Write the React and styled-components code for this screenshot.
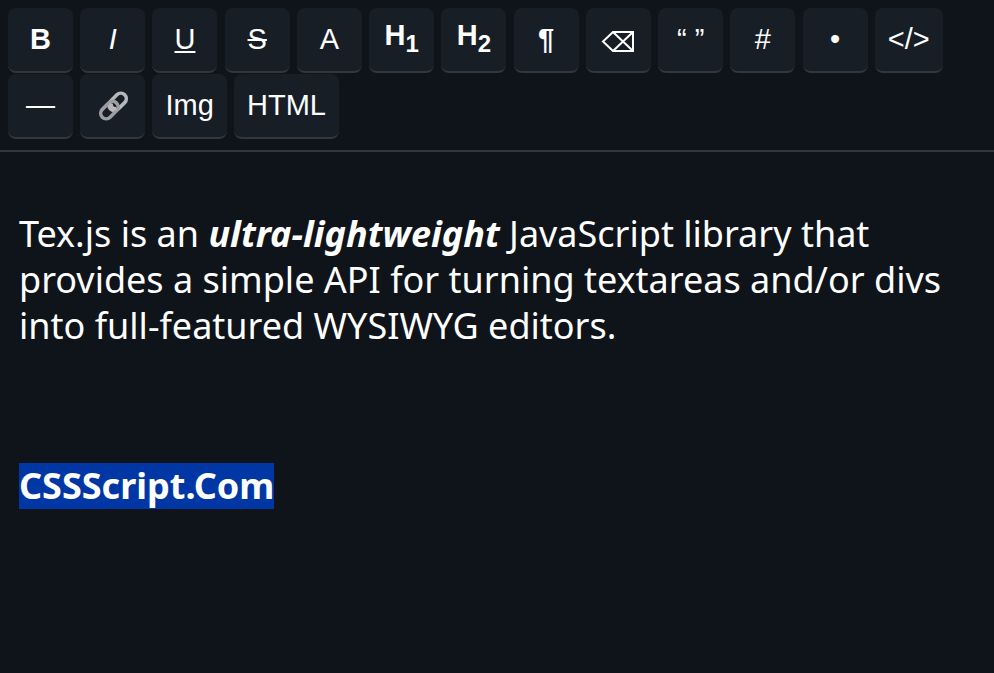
import React from 'react';
import styled, { createGlobalStyle } from 'styled-components';

const GlobalStyle = createGlobalStyle`
    body {
        margin: 0;
        background-color: #0f131a;
    }
`

const Editor = styled.div`
    min-height: 100vh;
    background-color: #0f131a;
    color: #fff;
`

// the spaces between the buttons come from this font size
const Toolbar = styled.div`
    padding: 8px 8px 10px;
    border-bottom: 2px solid #34363b;
    font-family: "Liberation Sans", Arial, sans-serif;
    font-size: 26px;
    line-height: 66px;
`

const Button = styled.button`
    display: inline-flex;
    align-items: center;
    justify-content: center;
    vertical-align: top;
    box-sizing: border-box;
    min-width: 65px;
    height: 65px;
    margin: 0;
    padding: 0 13px 2px;
    border: none;
    border-bottom: 2px solid #34363b;
    border-radius: 8px;
    background-color: #181e26;
    color: #fff;
    font-family: inherit;
    font-size: 29px;
    font-weight: ${props => props.$bold ? 'bold' : 'normal'};
    line-height: 36px;
    white-space: pre;
    cursor: pointer;

    :hover {
        background-color: #222832;
    }

    sub {
        font-size: 24px;
        line-height: 32px;
    }
`

const Icon = styled.svg`
    display: block;
    flex: none;
`

const Content = styled.div`
    padding: 25px 19px;
    font-family: "Segoe UI", "Noto Sans", sans-serif;
    font-size: 36px;
    line-height: 46px;
    outline: none;

    p {
        margin: 34px 0;
    }
`

const Selected = styled.b`
    display: inline-block;
    background-color: #0037a5;
`

const EraseIcon = () => (
    <Icon width="34" height="26" viewBox="0 0 34 26" fill="none" stroke="#fff" strokeWidth="2" aria-hidden="true">
        <path d="M12 6H32V25H12L2 15.5Z" />
        <path d="M12 6L32 25M32 6L12 25" />
    </Icon>
)

const LinkIcon = () => (
    <Icon width="32" height="34" viewBox="0 0 32 34" fill="none" strokeWidth="3.6" aria-hidden="true">
        <rect x="-10" y="-5.5" width="20" height="11" rx="5.5" stroke="#b6b8bc" transform="translate(20.6 13.9) rotate(-45)" />
        <rect x="-10" y="-5.5" width="20" height="11" rx="5.5" stroke="#9b9da1" transform="translate(12.4 22.1) rotate(-45)" />
        <path d="M14.2 15.4C13.6 18.4 15.6 21.4 19.4 20.6" stroke="#b6b8bc" />
    </Icon>
)

const Buttons = [
    { title: "Bold", label: "B", bold: true },
    { title: "Italic", label: <i>I</i> },
    { title: "Underline", label: <u>U</u> },
    { title: "Strike-through", label: <s>S</s> },
    { title: "Text color", label: "A" },
    { title: "Heading 1", label: <span>H<sub>1</sub></span>, bold: true },
    { title: "Heading 2", label: <span>H<sub>2</sub></span>, bold: true },
    { title: "Paragraph", label: "¶", bold: true },
    { title: "Remove format", label: <EraseIcon /> },
    { title: "Quote", label: "“ ”" },
    { title: "Ordered list", label: "#" },
    { title: "Unordered list", label: "•" },
    { title: "Code", label: "</>" },
    { title: "Horizontal line", label: "—" },
    { title: "Link", label: <LinkIcon /> },
    { title: "Image", label: "Img" },
    { title: "HTML", label: "HTML" },
]

const App = () => {
    return (
        <Editor>
            <GlobalStyle />
            <Toolbar role="toolbar">
                {Buttons.map(button => (
                    <React.Fragment key={button.title}>
                        <Button type="button" aria-label={button.title} $bold={button.bold}>{button.label}</Button>{' '}
                    </React.Fragment>
                ))}
            </Toolbar>

            <Content contentEditable suppressContentEditableWarning spellCheck={false}>
                <p>Tex.js is an <b><i>ultra-lightweight</i></b> JavaScript library that provides a simple API for turning textareas and/or divs into full-featured WYSIWYG editors.</p>
                <p><br /></p>
                <p><Selected>CSSScript.Com</Selected></p>
            </Content>
        </Editor>
    );
};

export default App;
